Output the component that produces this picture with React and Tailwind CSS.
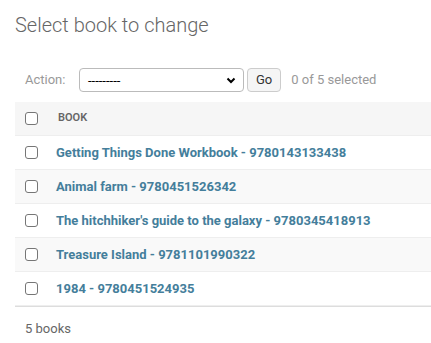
const books = [
  "Getting Things Done Workbook - 9780143133438",
  "Animal farm - 9780451526342",
  "The hitchhiker's guide to the galaxy - 9780345418913",
  "Treasure Island - 9781101990322",
  "1984 - 9780451524935",
];

function Checkbox() {
  return <span className="block w-[13px] h-[13px] rounded-[3px] border border-[#767676] bg-white" />;
}

export default function App() {
  return (
    <div className="w-[431px] h-[343px] bg-white overflow-hidden font-['Roboto',sans-serif] text-[#333]">
      <div className="pl-[15px]">
        <h1 className="pt-[11px] text-[20px] font-light text-[#666] leading-[28px]">Select book to change</h1>

        {/* Actions */}
        <div className="mt-[29px] flex items-center h-[24px] pl-[10px] text-[13px]">
          <span className="text-[#999] w-[54px]">Action:</span>
          <div className="w-[165px] h-[24px] border border-[#bbb] rounded-[4px] bg-white flex items-center justify-between pl-[8px] pr-[7px]">
            <span className="text-[13px] text-black leading-none">---------</span>
            <svg width="10" height="7" viewBox="0 0 10 7">
              <polyline points="1.5,1.5 5,5 8.5,1.5" fill="none" stroke="#000" strokeWidth="2" />
            </svg>
          </div>
          <button className="ml-[3px] h-[24px] px-[8px] border border-[#ccc] rounded-[4px] bg-[#f5f5f5] text-[13px] text-[#333]">
            Go
          </button>
          <span className="ml-[10px] text-[#999]">0 of 5 selected</span>
        </div>

        {/* Table */}
        <div className="mt-[10px]">
          <div className="flex items-center h-[34px] bg-[#f6f6f6] border-b border-[#eee]">
            <div className="pl-[10px] w-[43px]"><Checkbox /></div>
            <span className="text-[11px] font-semibold text-[#666] uppercase">Book</span>
          </div>
          {books.map((b, i) => (
            <div
              key={b}
              className={`flex items-center h-[34px] border-b border-[#eee] ${i % 2 === 1 ? "bg-[#f9f9f9]" : "bg-white"}`}
            >
              <div className="pl-[10px] w-[41px]"><Checkbox /></div>
              <a className="text-[13px] font-bold text-[#447e9b]">{b}</a>
            </div>
          ))}
          <div className="border-t border-[#ddd] pl-[10px] pt-[12px] text-[13px] text-[#666]">5 books</div>
        </div>
      </div>
    </div>
  );
}
